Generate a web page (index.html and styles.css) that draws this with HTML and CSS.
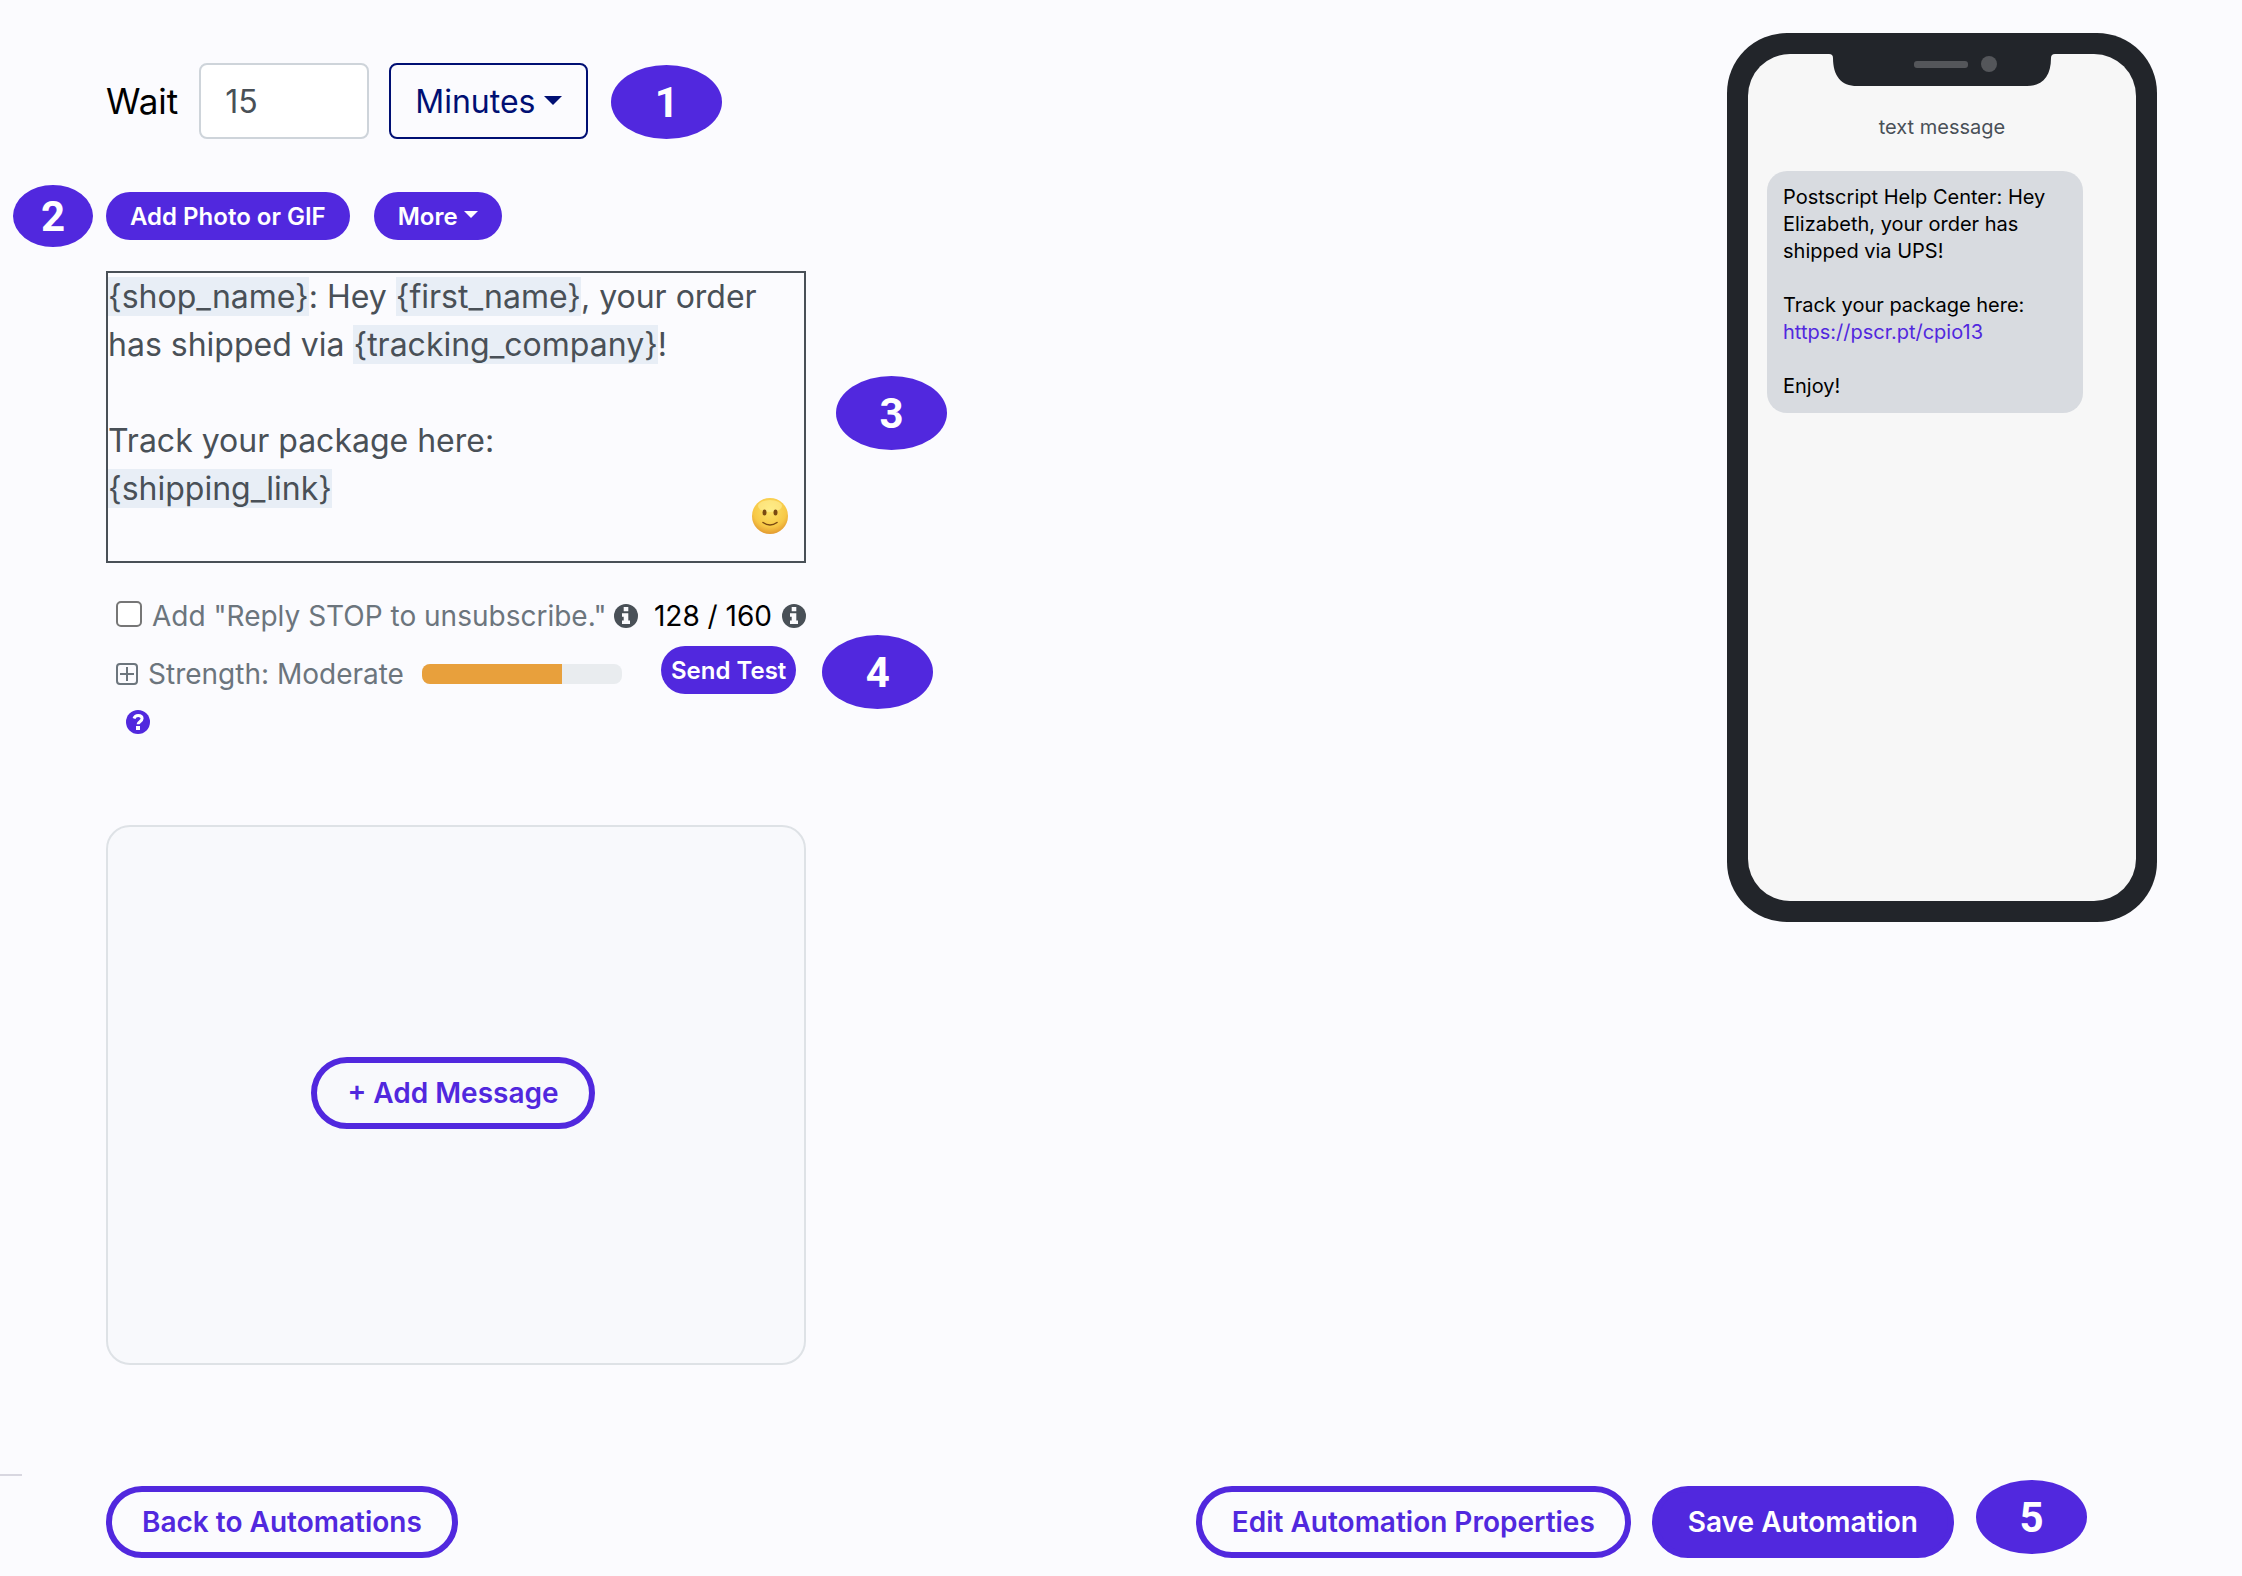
FILE: index.html
```html
<!DOCTYPE html>
<html lang="en">
<head>
  <meta charset="utf-8">
  <title>Edit Automation</title>
  <link rel="stylesheet" href="styles.css">
</head>
<body>
  <div class="page">
    <main class="content">
      <div class="builder">
        <div class="wait-row">
          <label class="wait-label" for="wait-amount">Wait</label>
          <input class="wait-input" id="wait-amount" type="text" value="15">
          <div class="unit">
            <select class="unit-select" aria-label="Wait unit">
              <option>Minutes</option>
              <option>Hours</option>
              <option>Days</option>
            </select>
          </div>
          <span class="badge">1</span>
        </div>

        <div class="toolbar">
          <span class="badge badge-small">2</span>
          <button class="btn-small" type="button">Add Photo or GIF</button>
          <button class="btn-small btn-more" type="button">More</button>
        </div>

        <div class="editor-row">
          <div class="editor">
            <div class="editor-text" contenteditable="true" role="textbox" aria-multiline="true" aria-label="Message" spellcheck="false">
              <div><span class="tag">{shop_name}</span>: Hey <span class="tag">{first_name}</span>, your order has shipped via <span class="tag">{tracking_company}</span>!</div>
              <div><br></div>
              <div>Track your package here:</div>
              <div><span class="tag">{shipping_link}</span></div>
            </div>
            <button class="emoji" type="button" aria-label="Insert emoji">
              <svg viewBox="0 0 36 36" width="36" height="36">
                <defs>
                  <radialGradient id="face" cx="0.5" cy="0.35" r="0.65">
                    <stop offset="0" stop-color="#fde368"/>
                    <stop offset="0.7" stop-color="#f7c846"/>
                    <stop offset="1" stop-color="#e39a30"/>
                  </radialGradient>
                </defs>
                <circle cx="18" cy="18" r="18" fill="url(#face)"/>
                <ellipse cx="18" cy="8" rx="12" ry="6" fill="#fff7a8" opacity="0.5"/>
                <ellipse cx="12.5" cy="14.5" rx="2" ry="3" fill="#7a4a12"/>
                <ellipse cx="23.5" cy="14.5" rx="2" ry="3" fill="#7a4a12"/>
                <path d="M11 24.5Q18 29.500 25 24.5" fill="none" stroke="#7a4a12" stroke-width="1.5" stroke-linecap="round"/>
              </svg>
            </button>
          </div>
          <span class="badge badge-editor">3</span>
        </div>

        <div class="stop-row">
          <input class="stop-check" id="stop" type="checkbox">
          <label class="stop-label" for="stop">Add "Reply STOP to unsubscribe."</label>
          <svg class="icon" viewBox="0 0 24 24"><circle cx="12" cy="12" r="12" fill="currentColor"/><path d="M9.700 3h4.600v4.300H9.700zM8 9.200h6.300v7.300H16V20H8v-3.500h1.700v-3.800H8z" fill="#fbfbfe"/></svg>
          <span class="count">128 / 160</span>
          <svg class="icon" viewBox="0 0 24 24"><circle cx="12" cy="12" r="12" fill="currentColor"/><path d="M9.700 3h4.600v4.300H9.700zM8 9.200h6.300v7.300H16V20H8v-3.500h1.700v-3.800H8z" fill="#fbfbfe"/></svg>
        </div>

        <div class="strength-row">
          <div class="strength">
            <div class="strength-line">
              <svg class="plus" viewBox="0 0 22 22"><rect x="1" y="1" width="20" height="20" rx="3" fill="none" stroke="currentColor" stroke-width="2"/><path d="M11 4v14M4 11h14" stroke="currentColor" stroke-width="2"/></svg>
              <span>Strength: Moderate</span>
              <div class="meter"><div class="meter-fill" style="width: 70%"></div></div>
            </div>
            <svg class="help" viewBox="0 0 24 24"><circle cx="12" cy="12" r="12" fill="currentColor"/><path d="M8 8.500C8.700 6.500 10 5.500 12.200 5.500c2.300 0 3.900 1.200 3.900 3.100 0 2.900-3.900 2.700-4 5.700" fill="none" stroke="#fff" stroke-width="3"/><path d="M10 16h4v4h-4z" fill="#fff"/></svg>
          </div>
          <button class="btn-small btn-test" type="button">Send Test</button>
          <span class="badge">4</span>
        </div>

        <div class="add-card">
          <button class="btn btn-outline" type="button">+ Add Message</button>
        </div>
      </div>

      <div class="phone">
        <div class="phone-screen">
          <svg class="notch" viewBox="0 0 226 32" width="226" height="32">
            <path d="M0 0h226q-4 0-4 4C222 22 214 32 198 32H28C12 32 4 22 4 4q0-4-4-4z" fill="#22252a"/>
            <rect x="85" y="7" width="54" height="7" rx="3" fill="#54565a"/>
            <circle cx="160" cy="10" r="8" fill="#54565a"/>
          </svg>
          <div class="phone-title">text message</div>
          <div class="bubble">
            <p>Postscript Help Center: Hey Elizabeth, your order has shipped via UPS!</p>
            <p>Track your package here: <a href="#">https://pscr.pt/cpio13</a></p>
            <p>Enjoy!</p>
          </div>
        </div>
      </div>
    </main>

    <footer class="footer">
      <hr class="divider">
      <div class="actions">
        <button class="btn btn-outline" type="button">Back to Automations</button>
        <button class="btn btn-outline btn-edit" type="button">Edit Automation Properties</button>
        <button class="btn btn-solid" type="button">Save Automation</button>
        <span class="badge">5</span>
      </div>
    </footer>
  </div>
</body>
</html>
```

FILE: styles.css
```css
* {
  box-sizing: border-box;
}
body {
  margin: 0;
  background: #fbfbfe;
  color: #000;
  font-family: Inter, "Liberation Sans", sans-serif;
  font-size: 28px;
}
button,
input,
select {
  font-family: inherit;
  margin: 0;
}
.page {
  display: flex;
  flex-direction: column;
  min-height: 100vh;
}
.content {
  display: flex;
  justify-content: space-between;
  align-items: flex-start;
  padding: 33px 85px 0 106px;
}
.builder {
  padding-top: 30px;
}

/* Step markers */
.badge {
  display: flex;
  flex-shrink: 0;
  align-items: center;
  justify-content: center;
  width: 111px;
  height: 74px;
  border-radius: 50%;
  background: #5128de;
  color: #fff;
  font-family: Roboto, "Liberation Sans", sans-serif;
  font-size: 42px;
  font-weight: bold;
}
.badge-small {
  width: 80px;
  height: 62px;
}
.badge-editor {
  margin-bottom: 8px;
}

/* Delay */
.wait-row {
  display: flex;
  align-items: flex-end;
}
.wait-label {
  font-size: 35px;
  line-height: 76px;
  margin-right: 21px;
}
.wait-input {
  width: 170px;
  height: 76px;
  margin-right: 20px;
  padding: 0 24px;
  border: 2px solid #ced4da;
  border-radius: 8px;
  background: #fff;
  color: #495057;
  font-size: 32px;
}
.unit {
  position: relative;
  margin-right: 23px;
}
.unit-select {
  appearance: none;
  display: block;
  width: 199px;
  height: 76px;
  padding: 0 24px;
  border: 2px solid #000f73;
  border-radius: 8px;
  background: transparent;
  color: #000f73;
  font-size: 32px;
}
.unit::after {
  content: "";
  position: absolute;
  top: 33px;
  right: 26px;
  border-top: 9px solid #000f73;
  border-left: 9px solid transparent;
  border-right: 9px solid transparent;
  pointer-events: none;
}

/* Toolbar */
.toolbar {
  display: flex;
  align-items: center;
  margin: 46px 0 24px -93px;
}
.toolbar .badge {
  margin-right: 13px;
}
.btn-small {
  height: 48px;
  padding: 0 24px;
  border: 0;
  border-radius: 24px;
  background: #5128de;
  color: #fff;
  font-size: 24px;
  font-weight: 600;
}
.btn-more {
  display: flex;
  align-items: center;
  gap: 6px;
  margin-left: 24px;
}
.btn-more::after {
  content: "";
  margin-bottom: 4px;
  border-top: 7px solid #fff;
  border-left: 7px solid transparent;
  border-right: 7px solid transparent;
}

/* Message editor */
.editor-row {
  display: flex;
  align-items: center;
  gap: 30px;
}
.editor {
  position: relative;
  width: 700px;
  border: 2px solid #495057;
}
.editor-text {
  min-height: 288px;
  padding-right: 40px;
  color: #495057;
  font-size: 32px;
  line-height: 48px;
  outline: none;
}
.tag {
  background: #e8eef6;
}
.emoji {
  position: absolute;
  right: 16px;
  bottom: 27px;
  padding: 0;
  border: 0;
  background: none;
}
.emoji svg {
  display: block;
}

/* Options */
.stop-row {
  display: flex;
  align-items: center;
  width: 700px;
  margin-top: 34px;
  padding-left: 10px;
  line-height: 38px;
}
.stop-check {
  appearance: none;
  width: 26px;
  height: 26px;
  margin: 0 10px 4px 0;
  border: 2px solid #767676;
  border-radius: 5px;
  background: #fff;
}
.stop-label {
  margin-right: 8px;
  color: #6c757d;
}
.icon {
  width: 24px;
  height: 24px;
  color: #495057;
}
.count {
  margin: 0 10px 0 auto;
}
.strength-row {
  display: flex;
  align-items: flex-start;
}
.strength {
  width: 555px;
  padding: 15px 0 0 10px;
  color: #6c757d;
}
.strength-line {
  display: flex;
  align-items: center;
  line-height: 48px;
}
.plus {
  width: 22px;
  height: 22px;
  margin-right: 10px;
}
.meter {
  width: 200px;
  height: 20px;
  margin-left: 18px;
  border-radius: 8px;
  background: #e9ecef;
  overflow: hidden;
}
.meter-fill {
  height: 100%;
  background: #e8a03c;
}
.help {
  display: block;
  width: 24px;
  height: 24px;
  margin: 12px 0 12px 10px;
  color: #5128de;
}
.btn-test {
  margin: 11px 26px 0 0;
  padding: 0 10px;
}
.add-card {
  display: flex;
  align-items: center;
  justify-content: center;
  width: 700px;
  height: 540px;
  margin-top: 79px;
  padding: 0 6px 4px 0;
  border: 2px solid #dee2e6;
  border-radius: 24px;
  background: #f8f9fc;
}

/* Large buttons */
.btn {
  height: 72px;
  padding: 0 30px;
  border: 6px solid #5128de;
  border-radius: 36px;
  font-size: 28px;
  font-weight: 600;
}
.btn-outline {
  background: transparent;
  color: #5128de;
}
.btn-solid {
  background: #5128de;
  color: #fff;
}

/* Phone preview */
.phone {
  width: 430px;
  padding: 21px;
  border-radius: 60px;
  background: #22252a;
}
.phone-screen {
  min-height: 847px;
  padding: 0 19px;
  border-radius: 42px;
  background: #f7f7f7;
}
.notch {
  display: block;
  margin: 0 auto;
}
.phone-title {
  margin-top: 28px;
  color: #495057;
  font-size: 20px;
  line-height: 27px;
  text-align: center;
}
.bubble {
  width: 316px;
  margin-top: 30px;
  padding: 13px 16px;
  border-radius: 20px;
  background: #d8dbe0;
  font-size: 20px;
  line-height: 27px;
}
.bubble p {
  margin: 0 0 27px;
}
.bubble p:last-child {
  margin-bottom: 0;
}
.bubble a {
  color: #5128de;
  text-decoration: none;
}

/* Footer */
.footer {
  margin-top: auto;
  padding-bottom: 18px;
}
.divider {
  width: 22px;
  height: 2px;
  margin: 0 0 4px;
  border: 0;
  background: #d8d7e0;
}
.actions {
  display: flex;
  align-items: flex-end;
  padding: 0 155px 0 106px;
}
.btn-edit {
  margin: 0 21px 0 auto;
}
.actions .badge {
  margin: 0 0 4px 22px;
}
```
